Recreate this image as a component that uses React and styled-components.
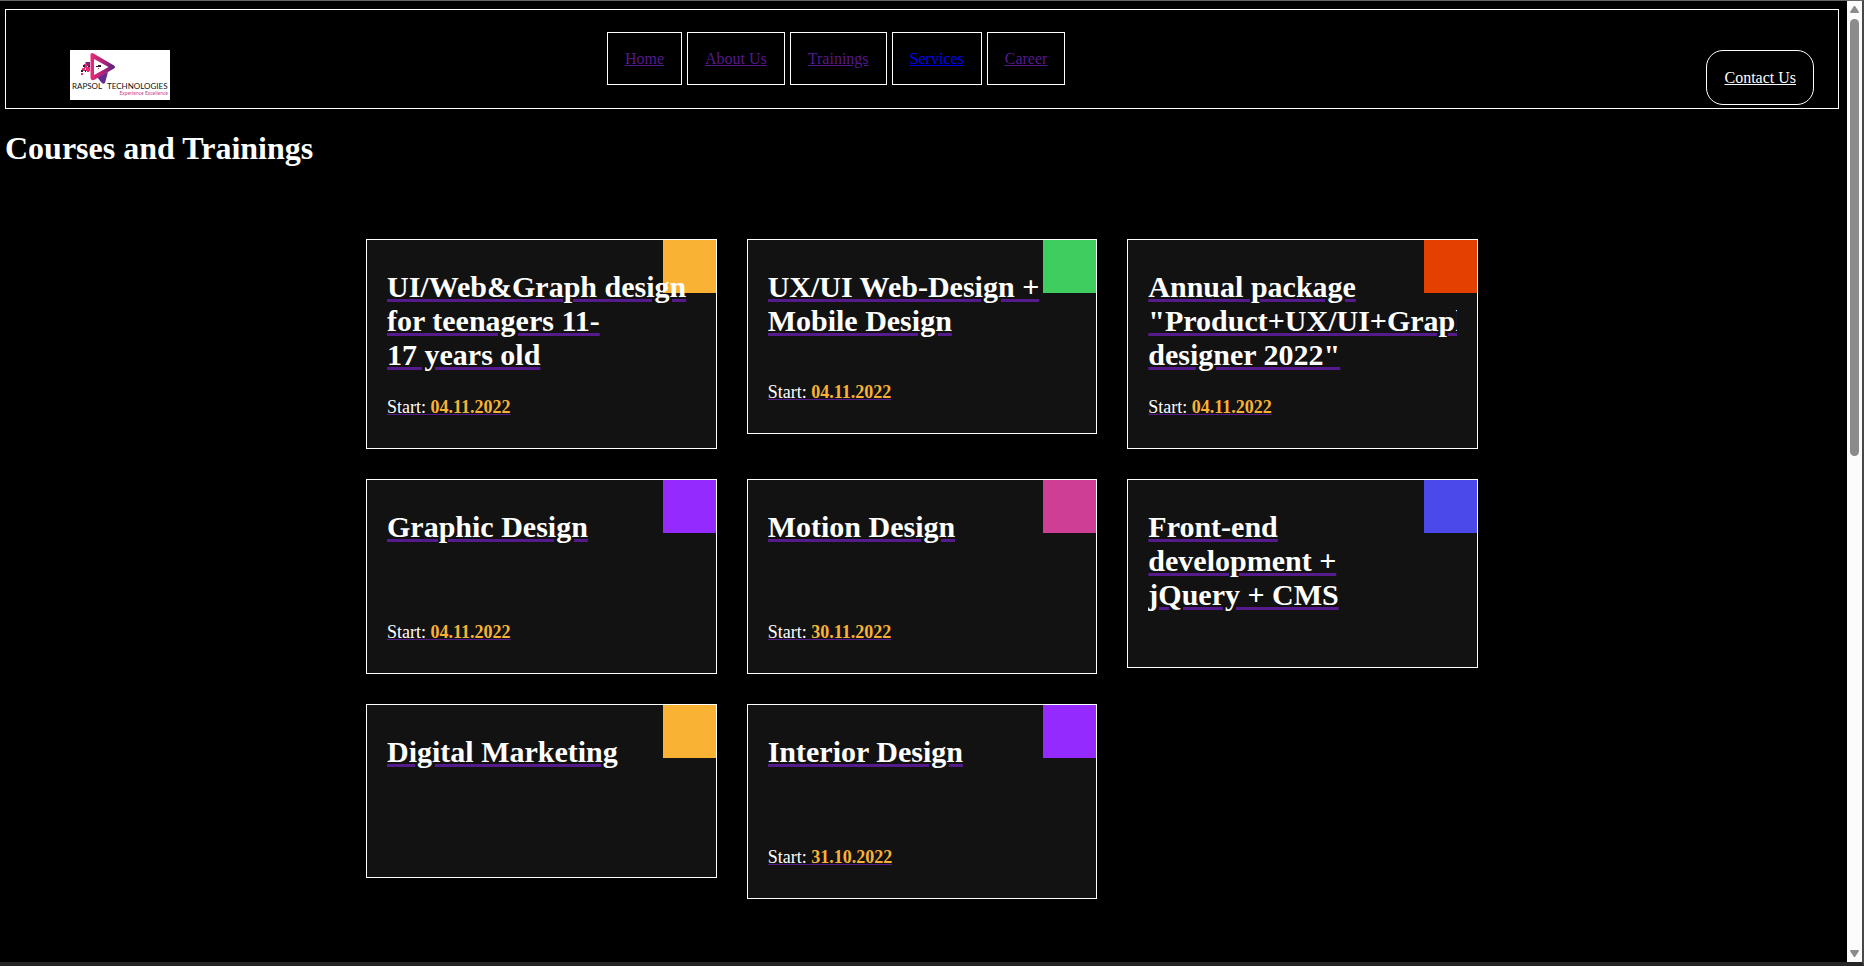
import React from "react";
import styled, { createGlobalStyle } from "styled-components";

const GlobalStyle = createGlobalStyle`
  * { box-sizing: border-box; }
  body {
    margin: 0;
    background: #000;
    color: #fff;
    font-family: "Liberation Serif", "Times New Roman", serif;
    font-size: 16px;
  }
`;

const Window = styled.div`
  display: grid;
  grid-template-columns: minmax(0, 1fr) 15px;
  min-height: 100vh;
  border: solid #262626;
  border-width: 1px 2px 4px 0;
  border-top-color: #666;
  border-right-color: #484848;
`;

const Page = styled.div`
  padding: 8px 8px 8px 5px;
`;

const Header = styled.header`
  display: grid;
  grid-template-columns: 7fr auto 9fr;
  align-items: start;
  min-height: 100px;
  border: 1px solid #fff;
`;

const LogoLink = styled.a`
  justify-self: start;
  margin: 40px 0 0 64px;
  background: #fff;
  svg { display: block; }
`;

const Nav = styled.nav`
  display: flex;
  gap: 5px;
  margin-top: 22px;
`;

const NavLink = styled.a`
  padding: 17px;
  border: 1px solid #fff;
  line-height: 17px;
  color: ${(p) => (p.$visited ? "#551a8b" : "#0000ee")};
`;

const ContactLink = styled.a`
  justify-self: end;
  margin: 40px 24px 0 0;
  padding: 17px;
  border: 1px solid #fff;
  border-radius: 17px;
  line-height: 19px;
  color: #fff;
`;

const PageTitle = styled.h1`
  margin: 21px 0 72px;
  font-size: 32px;
  line-height: 37px;
`;

const CourseGrid = styled.main`
  display: grid;
  grid-template-columns: repeat(3, minmax(0, 1fr));
  align-items: start;
  gap: 30px;
  max-width: 1112px;
  margin: 0 auto;
`;

const Card = styled.a`
  position: relative;
  display: block;
  padding: 30px 20px;
  border: 1px solid #fff;
  background: #121212;
  color: #551a8b;
`;

const Corner = styled.span`
  position: absolute;
  top: 0;
  right: 0;
  width: 53px;
  height: 53px;
  background: ${(p) => p.$color};
`;

const CardTitle = styled.h2`
  position: relative;
  min-height: 87px;
  margin: 0 0 25px;
  overflow: hidden;
  font-size: 30px;
  line-height: 34px;
  span { color: #fff; }
`;

const StartLine = styled.div`
  font-size: 18px;
  line-height: 21px;
  span { color: #fff; }
  time { color: #f9b234; font-weight: bold; }
`;

const ScrollRail = styled.div`
  display: grid;
  grid-template-rows: 18px 437fr 489fr 17px;
  justify-items: center;
  background: #fcfcfc;
`;

const Thumb = styled.div`
  width: 9px;
  border-radius: 5px;
  background: #8b8b8b;
`;

const Arrow = styled.svg`
  display: block;
  fill: #8b8b8b;
  grid-row: ${(p) => p.$row};
`;

const links = [
  { label: "Home", visited: true },
  { label: "About Us", visited: true },
  { label: "Trainings", visited: true },
  { label: "Services", visited: false },
  { label: "Career", visited: true },
];

const courses = [
  { title: "UI/Web&Graph design for teenagers 11-17\u00a0years\u00a0old", date: "04.11.2022", color: "#f9b234" },
  { title: "UX/UI Web-Design + Mobile Design", date: "04.11.2022", color: "#3ecd5e" },
  { title: "Annual package \"Product+UX/UI+Graph designer 2022\"", date: "04.11.2022", color: "#e44002" },
  { title: "Graphic Design", date: "04.11.2022", color: "#952aff" },
  { title: "Motion Design", date: "30.11.2022", color: "#cd3e94" },
  { title: "Front-end development\u00a0+ jQuery\u00a0+\u00a0CMS", color: "#4c49ea" },
  { title: "Digital Marketing", color: "#f9b234" },
  { title: "Interior Design", date: "31.10.2022", color: "#952aff" },
];

function Logo() {
  return (
    <svg width="100" height="50" viewBox="0 0 100 50" role="img" aria-label="Rapsol Technologies">
      <defs>
        <linearGradient id="play" x1="0" y1="0" x2="1" y2="0">
          <stop offset="0" stopColor="#e92b78" />
          <stop offset="0.5" stopColor="#b42279" />
          <stop offset="1" stopColor="#562080" />
        </linearGradient>
      </defs>
      <path d="M27 27 38 22 35 33Q33 35 31 32Z" fill="#642c91" />
      <path
        d="M20.5 4.5Q21 2 23.5 3.5L44 15.5Q46 17 44 18.5L24 30Q21 31 20.5 28Z M24 9V25L38.5 17Z"
        fill="url(#play)"
        fillRule="evenodd"
      />
      <path d="M15.5 12H20V16H15.5Z" fill="#7b247e" />
      <path d="M14 14H17V18H14Z M16 17H20V21H16Z M12 18H15V21H12Z M11 23H13V25H11Z M17 21H19V22H17Z" fill="#e12b7b" />
      <path d="M13 15H15V17H13Z M11 20H13V22H11Z M15 20H16V22H15Z M18 16H20V17H18Z M28 15H31V17H28Z M26 16H28V17H26Z" fill="#2d1c2a" />
      <path d="M28 18H29V19H28Z" fill="#e12b7b" />
      <g fontFamily="Lato, sans-serif" fontSize="8" fill="#111">
        <text x="2" y="39">RAPSOL</text>
        <text x="37" y="39">TECHNOLOGIES</text>
      </g>
      <text x="98" y="45" textAnchor="end" fontFamily="Lato, sans-serif" fontSize="5" fill="#cf3f91">
        Experience Excellence
      </text>
    </svg>
  );
}

export default function App() {
  return (
    <>
      <GlobalStyle />
      <Window>
        <Page>
          <Header>
            <LogoLink href="#home"><Logo /></LogoLink>
            <Nav>
              {links.map((l) => (
                <NavLink key={l.label} href={"#" + l.label} $visited={l.visited}>{l.label}</NavLink>
              ))}
            </Nav>
            <ContactLink href="#contact">Contact Us</ContactLink>
          </Header>
          <PageTitle>Courses and Trainings</PageTitle>
          <CourseGrid>
            {courses.map((c) => (
              <Card key={c.title} href="#course">
                <Corner $color={c.color} />
                <CardTitle><span>{c.title}</span></CardTitle>
                {c.date && (
                  <StartLine><span>Start: </span><time>{c.date}</time></StartLine>
                )}
              </Card>
            ))}
          </CourseGrid>
        </Page>
        <ScrollRail aria-hidden="true">
          <Arrow $row={1} width="15" height="18"><path d="M7 5h1l4 6q0 1-1 1H4q-1 0-1-1Z" /></Arrow>
          <Thumb />
          <Arrow $row={4} width="15" height="17"><path d="M3 6q0-1 1-1h7q1 0 1 1l-4 6H7Z" /></Arrow>
        </ScrollRail>
      </Window>
    </>
  );
}
